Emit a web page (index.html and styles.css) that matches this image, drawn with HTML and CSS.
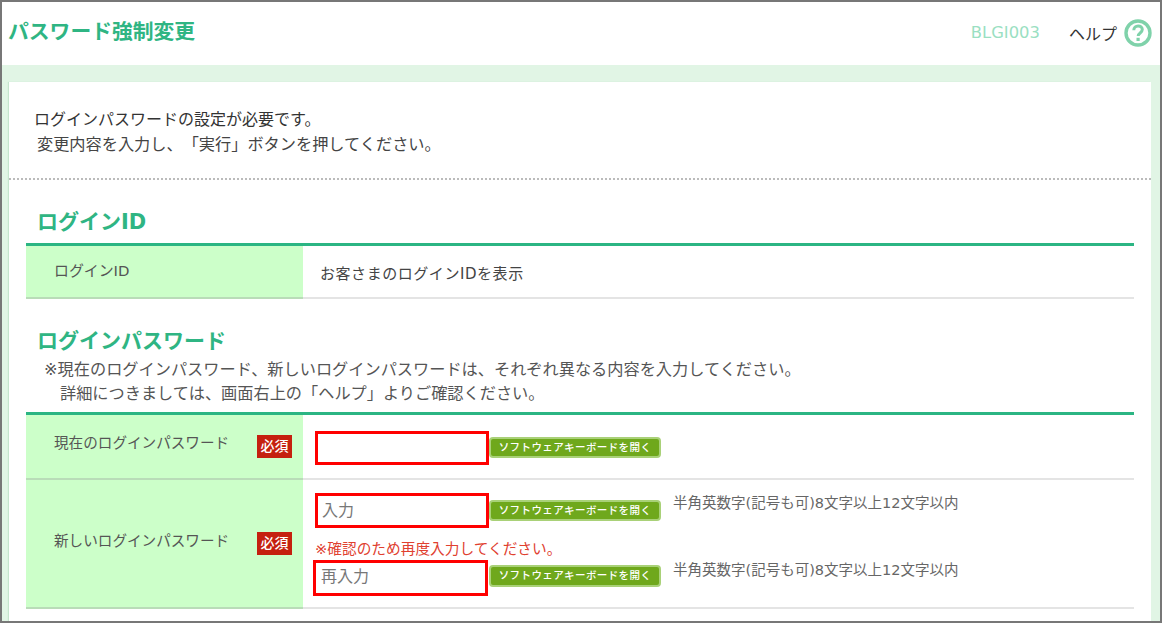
FILE: index.html
```html
<!DOCTYPE html>
<html lang="ja">
<head>
<meta charset="utf-8">
<title>パスワード強制変更</title>
<link rel="stylesheet" href="styles.css">
</head>
<body>
<div class="frame">
  <header class="top">
    <h1 class="title">パスワード強制変更</h1>
    <span class="code">BLGI003</span>
    <span class="help">ヘルプ</span>
    <svg class="help-icon" viewBox="0 0 28 28" aria-hidden="true">
      <circle cx="14" cy="14" r="12" fill="#fff" stroke="#7fd2aa" stroke-width="3.400"/>
      <path d="M9.800 11.200c0-2.700 1.900-4.300 4.300-4.300s4.200 1.500 4.200 3.700c0 3.300-4.100 3.400-4.100 6.400" fill="none" stroke="#7fd2aa" stroke-width="3"/>
      <rect x="12.500" y="18.800" width="3.200" height="3.200" fill="#7fd2aa"/>
    </svg>
  </header>
  <div class="band">
    <main class="panel">
      <section class="intro">
        <p class="intro-a">ログインパスワードの設定が必要です。</p>
        <p class="intro-b">変更内容を入力し、「実行」ボタンを押してください。</p>
      </section>
      <section class="block">
        <h2 class="heading">ログインID</h2>
        <div class="table">
          <div class="row row-id">
            <div class="label"><span class="label-text label-id">ログインID</span></div>
            <div class="value"><span class="id-text">お客さまのログインIDを表示</span></div>
          </div>
        </div>
      </section>
      <section class="block block-pw">
        <h2 class="heading heading-pw">ログインパスワード</h2>
        <p class="note">※現在のログインパスワード、新しいログインパスワードは、それぞれ異なる内容を入力してください。</p>
        <p class="note note-2">詳細につきましては、画面右上の「ヘルプ」よりご確認ください。</p>
        <div class="table table-pw">
          <div class="row row-current">
            <div class="label label-top">
              <span class="label-text">現在のログインパスワード</span>
              <span class="badge">必須</span>
            </div>
            <div class="value value-current">
              <div class="field">
                <div class="box"></div>
                <span class="kbd">ソフトウェアキーボードを開く</span>
              </div>
            </div>
          </div>
          <div class="row row-new">
            <div class="label label-mid">
              <span class="label-text">新しいログインパスワード</span>
              <span class="badge">必須</span>
            </div>
            <div class="value value-new">
              <div class="field">
                <div class="box box-new">入力</div>
                <span class="kbd kbd-new">ソフトウェアキーボードを開く</span>
                <span class="hint">半角英数字(記号も可)8文字以上12文字以内</span>
              </div>
              <p class="warn">※確認のため再度入力してください。</p>
              <div class="field">
                <div class="box box-new box-re">再入力</div>
                <span class="kbd kbd-re">ソフトウェアキーボードを開く</span>
                <span class="hint">半角英数字(記号も可)8文字以上12文字以内</span>
              </div>
            </div>
          </div>
        </div>
      </section>
    </main>
  </div>
</div>
</body>
</html>
```
FILE: styles.css
```css
* { box-sizing: border-box; }
html, body { margin: 0; padding: 0; background: #fff; }
body {
  width: 1163px;
  height: 625px;
  overflow: hidden;
  font-family: "DejaVu Sans", "Noto Sans CJK JP", sans-serif;
  color: #444;
  text-spacing-trim: space-all;
}
p, h1, h2 { margin: 0; }
.frame {
  width: 1162px;
  height: 623px;
  border: 2px solid #777;
  display: flex;
  flex-direction: column;
  overflow: hidden;
}
.top {
  height: 63px;
  flex: none;
  display: flex;
  align-items: center;
  background: #fff;
  padding: 0 8px 2px 6px;
}
.title {
  font-size: 20.8px;
  line-height: 30px;
  font-weight: 700;
  color: #2fb583;
  margin-right: auto;
  margin-bottom: 2px;
}
.code {
  font-size: 16.4px;
  color: #9adfc2;
}
.help {
  margin-left: 29px;
  font-size: 16px;
  color: #333;
}
.help-icon {
  width: 28px;
  height: 28px;
  margin-left: 7px;
}
.band {
  flex: 1;
  background: #e1f5e5;
  padding: 17px 9px 0 7px;
  display: flex;
}
.panel {
  flex: 1;
  background: #fff;
  box-shadow: -1px 0 1px #c5e5cd;
}
.intro {
  height: 98px;
  padding-top: 26px;
  border-bottom: 2px dotted #bbb;
}
.intro-a {
  font-size: 16px;
  line-height: 24px;
  padding-left: 25px;
  color: #333;
}
.intro-b {
  font-size: 16.2px;
  line-height: 24px;
  margin-top: 1px;
  padding-left: 28px;
  color: #444;
}
.block {
  padding: 27px 17px 0;
}
.block-pw {
  padding-top: 27px;
}
.heading {
  font-size: 21px;
  line-height: 30px;
  font-weight: 700;
  color: #2fb583;
  padding-left: 11px;
  margin-bottom: 6px;
}
.heading-pw {
  margin-bottom: 2px;
}
.note {
  font-size: 16.2px;
  line-height: 24px;
  padding-left: 18px;
  color: #555;
}
.note-2 {
  padding-left: 34px;
}
.table {
  border-top: 3px solid #2bb583;
}
.table-pw {
  margin-top: 6px;
}
.row {
  display: grid;
  grid-template-columns: 277px 1fr;
  border-bottom: 2px solid #e4e4e4;
}
.row-id { height: 53px; }
.row-current { height: 65px; }
.row-new { height: 129px; }
.label {
  background: #ccffc9;
  display: flex;
  align-items: flex-start;
  padding-left: 28px;
  margin-bottom: -2px;
  border-bottom: 2px solid #b9dcb8;
}
.label-text {
  font-size: 14.6px;
  line-height: 20px;
  color: #555;
  width: 203px;
  flex: none;
}
.label-id {
  padding-top: 15px;
  font-size: 14.9px;
}
.label-top {
  padding-top: 18px;
}
.label-mid {
  padding-top: 51px;
}
.badge {
  width: 35px;
  height: 23px;
  margin-top: 2px;
  background: #c5200f;
  color: #fff;
  font-size: 14px;
  font-weight: 500;
  line-height: 23px;
  text-align: center;
}
.label-mid .badge {
  margin-top: 1px;
}
.value {
  padding-left: 17px;
}
.id-text {
  display: block;
  padding-top: 16px;
  font-size: 15px;
  letter-spacing: 0.55px;
  line-height: 24px;
  color: #444;
}
.value-current {
  padding: 16px 0 0 12px;
}
.value-new {
  padding: 13px 0 0 12px;
}
.field {
  display: flex;
  align-items: flex-start;
}
.box {
  width: 174px;
  height: 34px;
  border: 3px solid #f00;
  background: #fff;
  flex: none;
}
.box-new {
  height: 35px;
  font-size: 16px;
  line-height: 29px;
  padding-left: 4px;
  color: #777;
}
.box-re {
  width: 175px;
  height: 36px;
  margin-left: -2px;
  margin-right: 1px;
  padding-left: 5px;
  line-height: 28px;
}
.kbd {
  width: 172px;
  height: 21px;
  margin-top: 6px;
  flex: none;
  background: #6fa81c;
  border: 2px solid #a9d178;
  border-radius: 4px;
  color: #fff;
  font-size: 10.5px;
  font-weight: 500;
  line-height: 17px;
  letter-spacing: 0.4px;
  text-align: center;
  white-space: nowrap;
}
.kbd-new {
  margin-top: 7px;
}
.kbd-re {
  height: 22px;
  margin-top: 5px;
}
.hint {
  margin-left: 12px;
  font-size: 14.5px;
  line-height: 20px;
  color: #666;
  white-space: nowrap;
}
.warn {
  margin-top: 10px;
  margin-bottom: 1px;
  font-size: 14.7px;
  line-height: 21px;
  color: #e0402f;
}
```
